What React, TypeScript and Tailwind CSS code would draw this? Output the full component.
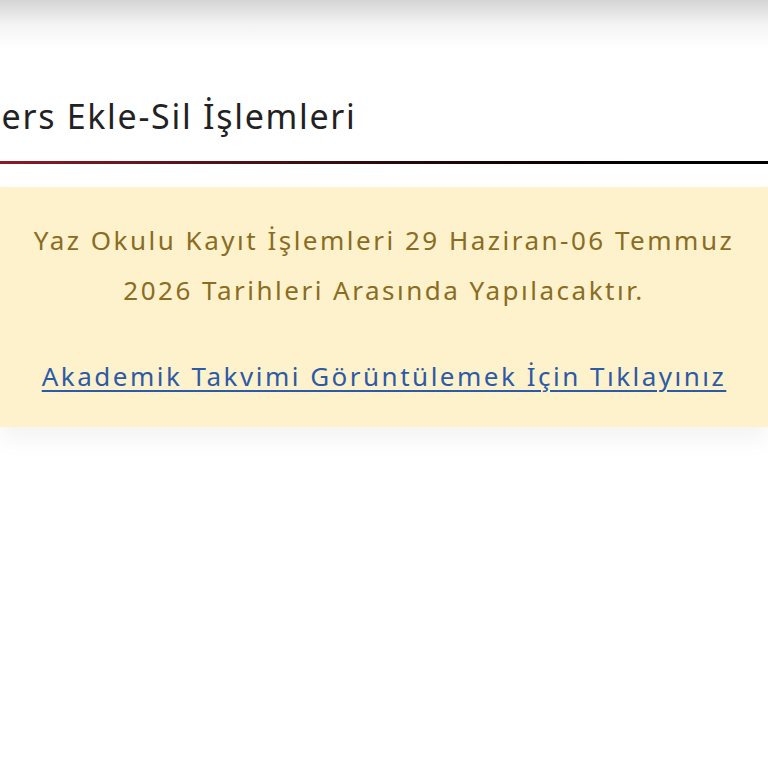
import React from "react";

const font = { fontFamily: "'Noto Sans', Lato, sans-serif" };

export default function App() {
  return (
    <div className="min-h-[768px] w-full overflow-hidden bg-white" style={font}>
      <div className="h-12 bg-gradient-to-b from-[#d4d4d4] via-[#f3f3f3] to-white" />

      <div className="pt-[48px]">
        <h2 className="-ml-[25px] whitespace-nowrap text-[34px] leading-[40px] tracking-[1.7px] text-[#222]">
          Ders Ekle-Sil İşlemleri
        </h2>
        <div className="mt-[25px] h-[3px] bg-gradient-to-r from-[#8b1a28] via-[#2a0a0e] to-black" />
      </div>

      <div className="mt-[23px] bg-[#fdf2cb] px-6 pt-[28px] pb-[26px] text-center text-[26px] leading-[50px] tracking-[2.5px] text-[#8a6c24] shadow-[0_12px_22px_rgba(0,0,0,0.05)]">
        <p>
          Yaz Okulu Kayıt İşlemleri 29 Haziran-06 Temmuz 2026 Tarihleri Arasında Yapılacaktır.
        </p>
        <p className="mt-[36px]">
          <a href="#" className="text-[#2d5aa6] underline underline-offset-4 decoration-2">
            Akademik Takvimi Görüntülemek İçin Tıklayınız
          </a>
        </p>
      </div>
    </div>
  );
}
